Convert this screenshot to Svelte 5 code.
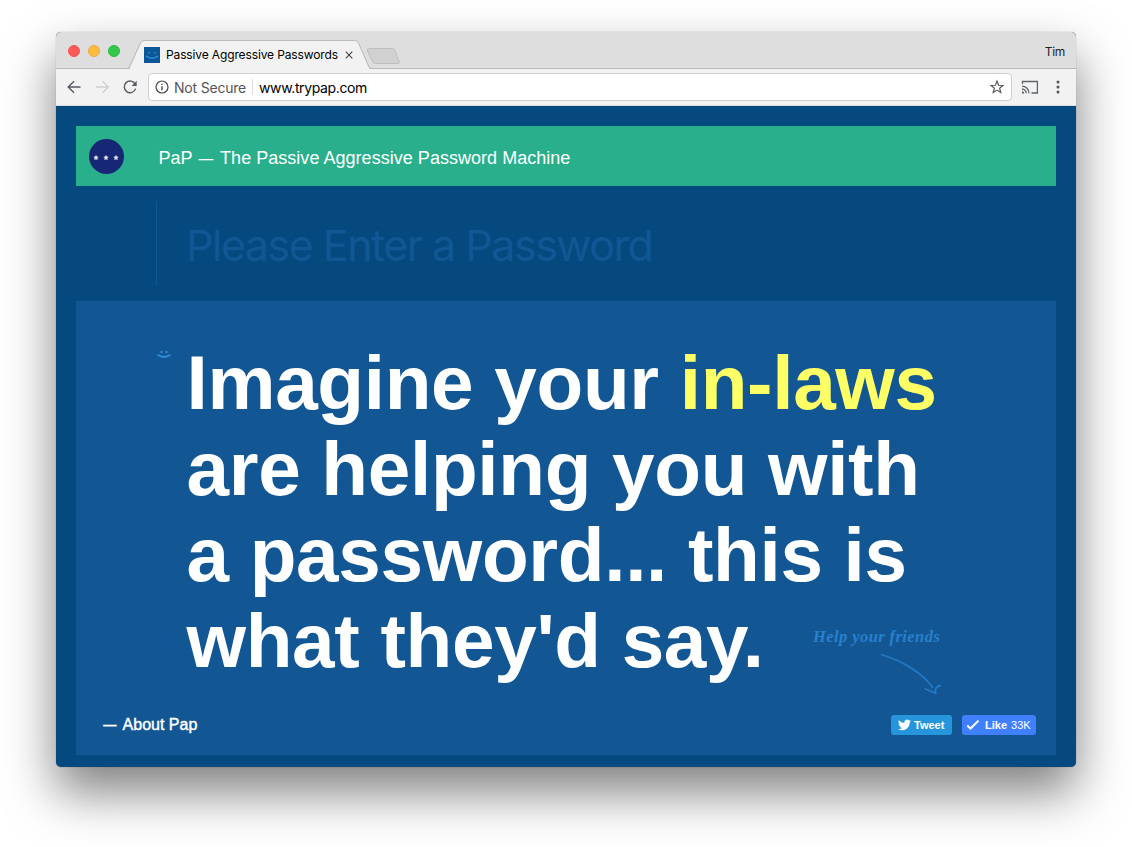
<script>
  const lines = ['are helping you with', 'a password... this is', "what they'd say."];
</script>

<main class="desktop">
  <section class="window">
    <header class="titlebar">
      <div class="lights"><i class="red"></i><i class="amber"></i><i class="green"></i></div>
      <svg class="tabs" width="290" height="38" viewBox="126 32 290 38">
        <path d="M126 69.5H129.500L140.500 43.500Q141.500 40.500 144.500 40.500H354.500Q357.500 40.500 358.500 43.500L369.500 69.500V70H126Z" fill="#f2f2f2"/>
        <path d="M126 68.500H128.500L140.500 43Q141.500 40.500 144.500 40.500H354.500Q357.500 40.500 358.500 43L369 67Q370 68.500 372 68.500H416" fill="none" stroke="#b9b9b9"/>
        <path d="M369.500 48.500H392Q394 48.500 395 50.500L399 61Q400 63.500 398 63.500H375.500Q373.500 63.500 372.500 61.500L367.500 51Q366.500 48.500 369.500 48.500Z" fill="#d1d1d1" stroke="#bfbfbf"/>
        <rect x="144" y="47" width="16" height="16" fill="#0c5797"/>
        <path d="M146 56Q152 60.500 158 56M149.200 52V53.500M154.800 52V53.500" fill="none" stroke="#2e8ddd" stroke-width="1.500"/>
        <path d="M345.800 51.700L352.300 58.300M352.300 51.700L345.800 58.300" stroke="#444" stroke-width="1.100"/>
      </svg>
      <span class="tabname">Passive Aggressive Passwords</span>
      <span class="user">Tim</span>
    </header>
    <nav class="toolbar">
      <svg class="navicons" width="92" height="36" viewBox="56 70 92 36" fill="none" stroke="#555a60" stroke-width="1.400">
        <path d="M80.500 87H68.500M74 81.300L68.200 87L74 92.700"/>
        <path d="M96 87H108M102.500 81.300L108.300 87L102.500 92.700" stroke="#d0d0d0"/>
        <path d="M135.200 84.200A5.800 5.800 0 1 0 135.600 88.600"/>
        <path d="M136.700 80.800V85.900H131.600Z" fill="#555a60" stroke="none"/>
      </svg>
      <div class="address">
        <svg width="14" height="14" viewBox="0 0 14 14"><circle cx="7" cy="7" r="6" fill="none" stroke="#444" stroke-width="1.200"/><path d="M7 6.200V10.200M7 3.700V5.100" stroke="#444" stroke-width="1.400"/></svg>
        <span class="secure">Not Secure</span><b></b><span class="url">www.trypap.com</span>
        <svg class="star" width="16" height="16" viewBox="0 0 16 16"><path d="M8 2L9.600 6.200L14 6.400L10.600 9.200L11.800 13.500L8 11.100L4.200 13.500L5.400 9.200L2 6.400L6.400 6.200Z" fill="none" stroke="#555" stroke-width="1.150"/></svg>
      </div>
      <svg class="actions" width="64" height="36" viewBox="1012 70 64 36" fill="none" stroke="#60656a" stroke-width="1.300">
        <path d="M1022.500 84V81.500H1037.400V93H1031.500M1022 86.200A7 7 0 0 1 1029 93.200M1022 89A4.300 4.300 0 0 1 1026.200 93.200"/>
        <path d="M1022 91.200A2.200 2.200 0 0 1 1024.200 93.400H1022Z" fill="#555a60" stroke="none"/>
        <g fill="#50545a" stroke="none"><circle cx="1058" cy="82" r="1.500"/><circle cx="1058" cy="87" r="1.500"/><circle cx="1058" cy="92" r="1.500"/></g>
      </svg>
    </nav>
    <div class="page">
      <div class="brand">
        <svg width="36" height="36" viewBox="0 0 36 36"><circle cx="17.500" cy="17.500" r="17.500" fill="#162776"/><g stroke="#e6e4f4" stroke-width="1.300">
          {#each [7, 17, 27] as x}<path d="M{x} 18.700V16.400M{x} 18.700L{x + 2.2} 18M{x} 18.700L{x + 1.4} 20.700M{x} 18.700L{x - 1.4} 20.700M{x} 18.700L{x - 2.2} 18"/>{/each}
        </g></svg>
        <p>PaP <span class="dash">—</span> The Passive Aggressive Password Machine</p>
      </div>
      <div class="entry"><span>Please Enter a Password</span></div>
      <div class="panel">
        <svg class="smile" width="16" height="10" viewBox="0 0 16 10"><path d="M1.500 4.700Q8 9.300 14.500 4.700" fill="none" stroke="#2e8ddd" stroke-width="1.900"/><path d="M4.500 1H6.500V3H4.500ZM9.500 1H11.500V3H9.500Z" fill="#2e8ddd"/></svg>
        <h1><span>Imagine your <em>in-laws</em></span>{#each lines as line}<span>{line}</span>{/each}</h1>
        <div class="hint">Help your friends
          <svg width="64" height="44" viewBox="878 652 64 44" fill="none" stroke="#2678c2" stroke-width="1.800"><path d="M881 654.500C903 661 924 674 933 688M924.500 688.500L935.500 693Q934.500 686 941 685.500"/></svg>
        </div>
        <footer>
          <span class="about"><span class="dash">—</span> About Pap</span>
          <div class="social tweet"><svg width="13" height="12" viewBox="0 0 24 20"><path fill="#fff" d="M24 2.400a10 10 0 0 1-2.800.8A5 5 0 0 0 23.300.4a10 10 0 0 1-3.100 1.200A4.900 4.900 0 0 0 11.800 6.100 14 14 0 0 1 1.700 1a4.900 4.900 0 0 0 1.500 6.600A5 5 0 0 1 1 7c0 2.400 1.600 4.400 3.900 4.900a5 5 0 0 1-2.200.1 4.900 4.900 0 0 0 4.600 3.400A9.900 9.900 0 0 1 0 17.500 14 14 0 0 0 21.500 4.900 10 10 0 0 0 24 2.400Z"/></svg><strong>Tweet</strong></div>
          <div class="social like"><svg width="14" height="12" viewBox="0 0 14 12"><path d="M1.300 6.500L4.500 9.500L12.500 1.600" fill="none" stroke="#fff" stroke-width="2"/></svg><strong>Like</strong><span>33K</span></div>
        </footer>
      </div>
    </div>
  </section>
</main>

<style>
  :global(body) { margin: 0; background: #fff; }
  * { box-sizing: border-box; }
  svg { display: block; flex: none; }
  .desktop { width: 1132px; height: 847px; padding: 32px 56px 80px; overflow: hidden; font-family: "Liberation Sans", sans-serif; }
  .window { width: 1020px; height: 735px; border-radius: 5px; overflow: hidden; background: #05497f; box-shadow: 0 0 1px rgba(0,0,0,.45), 0 25px 50px rgba(0,0,0,.5); }
  .titlebar { height: 37px; display: flex; position: relative; background: #dedede; border-bottom: 1px solid #b9b9b9; font-family: Inter, sans-serif; }
  .lights { display: flex; gap: 8px; padding: 13px 0 0 12px; width: 70px; }
  .lights i { width: 12px; height: 12px; border-radius: 50%; }
  .red { background: #fc5b57; border: 1px solid #f05552; }
  .amber { background: #fdbc40; border: 1px solid #eaac3c; }
  .green { background: #34c84a; border: 1px solid #2cb843; }
  .tabname { position: absolute; left: 110px; top: 15px; font-size: 12px; line-height: 16px; letter-spacing: -.13px; white-space: nowrap; }
  .user { margin: 12px 11px 0 auto; font-size: 12px; line-height: 16px; letter-spacing: -.3px; color: #222; }
  .toolbar { height: 37px; display: flex; background: #f2f2f2; border-bottom: 1px solid #ddd; }
  .navicons { margin-top: 1px; }
  .address { width: 864px; height: 28px; margin-top: 4px; padding: 0 8px 0 6px; border: 1px solid #d0d0d0; border-radius: 4px; background: #fff; display: flex; align-items: center; font: 14px Inter, sans-serif; white-space: nowrap; }
  .secure { margin-left: 5px; width: 73px; color: #555; letter-spacing: -.2px; }
  .url { letter-spacing: -.37px; }
  .address b { width: 1px; height: 16px; background: #ddd; margin: 0 6px 0 5px; }
  .star { margin-left: auto; margin-right: -2px; }
  .actions { margin-top: 1px; }
  .page { height: 661px; padding: 20px; }
  .brand { height: 60px; display: flex; align-items: center; padding: 1px 0 0 13px; background: #29af8c; color: #fff; font-size: 18px; }
  .brand p { margin: 3px 0 0 33.500px; letter-spacing: .03px; white-space: nowrap; }
  .dash { display: inline-block; transform: scaleX(.82); }
  .entry { height: 85px; margin: 15px 0 15px 80px; border-left: 1px solid #115793; padding: 17px 0 0 29px; font: 43px/54px Inter, sans-serif; letter-spacing: -1.500px; color: #115793; white-space: nowrap; }
  .panel { height: 454px; background: #125793; position: relative; display: flex; flex-direction: column; padding: 39px 20px 0 27px; }
  .smile { position: absolute; left: 80px; top: 49px; }
  h1 { margin: 0 0 0 83.500px; color: #fff; font-size: 76.500px; line-height: 86px; font-weight: 700; letter-spacing: -.32px; height: 344px; }
  h1 > span { display: block; white-space: nowrap; }
  em { color: #ffff66; font-style: normal; }
  .hint { position: absolute; left: 737px; top: 326px; font: italic bold 16.500px/20px "Liberation Serif", serif; letter-spacing: .42px; color: #2880cd; white-space: nowrap; }
  .hint svg { margin: 5px 0 0 65px; }
  footer { display: flex; align-items: center; height: 20px; margin-top: 31px; color: #fff; }
  .about { font-size: 16px; margin-right: auto; -webkit-text-stroke: .4px #fff; }
  .about .dash { transform-origin: 10% 50%; }
  .social { height: 20px; border-radius: 3px; display: flex; align-items: center; font-size: 11px; }
  .tweet { width: 61px; background: #2795dc; padding-left: 7px; gap: 3px; margin-right: 10px; }
  .like { width: 74px; background: #4080ff; padding-left: 4px; }
  .like strong { margin: 0 4px 0 5px; }
</style>
